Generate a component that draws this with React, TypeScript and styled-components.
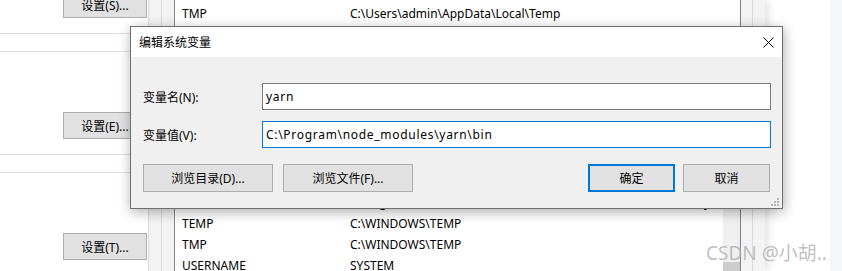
import React from "react";
import styled, { createGlobalStyle, css } from "styled-components";

const GlobalStyle = createGlobalStyle`
  html, body {
    margin: 0;
    padding: 0;
    background: #ffffff;
  }
  body {
    font-family: "Noto Sans", "Noto Sans CJK SC", sans-serif;
    font-size: 12px;
    color: #000000;
  }
`;

type EnvRow = { name: string; value: string };

const envRows: EnvRow[] = [
  { name: "TMP", value: "C:\\Users\\admin\\AppData\\Local\\Temp" },
  { name: "", value: "" },
  { name: "", value: "" },
  { name: "", value: "" },
  { name: "", value: "" },
  { name: "", value: "" },
  { name: "", value: "" },
  { name: "", value: "" },
  { name: "", value: "" },
  { name: "PSModulePath", value: "%ProgramFiles%\\WindowsPowerShell\\Modules;C:\\WINDOWS\\system32\\WindowsPowerShell\\v1.0\\Modules" },
  { name: "TEMP", value: "C:\\WINDOWS\\TEMP" },
  { name: "TMP", value: "C:\\WINDOWS\\TEMP" },
  { name: "USERNAME", value: "SYSTEM" },
];

const App: React.FC = () => {
  return (
    <>
      <GlobalStyle />
      <Screen>
        <BackWindow>
          <LeftPane>
            <SetButton>设置(S)...</SetButton>
            <GroupRule $gap={15} />
            <GroupRule $gap={17} />
            <SetButton $gap={60}>设置(E)...</SetButton>
            <GroupRule $gap={15} />
            <GroupRule $gap={17} />
            <SetButton $gap={60}>设置(T)...</SetButton>
          </LeftPane>

          <Strip>
            <StripCol $w={13} />
            <StripCol $w={13} />
          </Strip>

          <ListBox>
            <Rows>
              {envRows.map((row, i) => (
                <Row key={i}>
                  <NameCell>{row.name}</NameCell>
                  <ValueCell>{row.value}</ValueCell>
                </Row>
              ))}
            </Rows>
            <ScrollCol>
              <ScrollTrack>
                <ScrollThumb />
              </ScrollTrack>
            </ScrollCol>
          </ListBox>

          <Strip $shadow>
            <StripCol $w={11} $noBorder />
            <StripCol $w={13} />
          </Strip>

          <Filler />
        </BackWindow>
        <PageSide />

        <Dialog>
          <TitleBar>
            <Title>编辑系统变量</Title>
            <CloseButton>
              <svg width="11" height="11" viewBox="0 0 11 11">
                <path d="M0.5 0.5 L10.5 10.5 M10.5 0.5 L0.5 10.5" stroke="#000" strokeWidth="1" />
              </svg>
            </CloseButton>
          </TitleBar>
          <Body>
            <FieldRow>
              <FieldLabel>变量名(N):</FieldLabel>
              <TextBox>yarn</TextBox>
            </FieldRow>
            <FieldRow $gap={11}>
              <FieldLabel>变量值(V):</FieldLabel>
              <TextBox $focused>C:\Program\node_modules\yarn\bin</TextBox>
            </FieldRow>
            <ButtonRow>
              <ButtonGroup $gap={10}>
                <DlgButton $w={130}>浏览目录(D)...</DlgButton>
                <DlgButton $w={130}>浏览文件(F)...</DlgButton>
              </ButtonGroup>
              <ButtonGroup $gap={8}>
                <DlgButton $w={87} $primary>确定</DlgButton>
                <DlgButton $w={87}>取消</DlgButton>
              </ButtonGroup>
            </ButtonRow>
          </Body>
          <Grip width="9" height="9" viewBox="0 0 9 9">
            <rect x="6" y="0" width="2" height="2" fill="#b8b8b8" />
            <rect x="3" y="3" width="2" height="2" fill="#b8b8b8" />
            <rect x="6" y="3" width="2" height="2" fill="#b8b8b8" />
            <rect x="0" y="6" width="2" height="2" fill="#b8b8b8" />
            <rect x="3" y="6" width="2" height="2" fill="#b8b8b8" />
            <rect x="6" y="6" width="2" height="2" fill="#b8b8b8" />
          </Grip>
        </Dialog>

        <Watermark>CSDN @小胡..</Watermark>
      </Screen>
    </>
  );
};
export default App;

const Screen = styled.div`
  position: relative;
  width: 842px;
  height: 271px;
  overflow: hidden;
  display: flex;
  background: #ffffff;
`;

const BackWindow = styled.div`
  display: flex;
  width: 830px;
  height: 100%;
  background: #ffffff;
`;

const LeftPane = styled.div`
  width: 148px;
  flex-shrink: 0;
  display: flex;
  flex-direction: column;
  align-items: flex-end;
  margin-top: -9px;
`;

const SetButton = styled.div<{ $gap?: number }>`
  box-sizing: border-box;
  width: 84px;
  height: 27px;
  margin-right: 1px;
  margin-top: ${(p) => p.$gap || 0}px;
  flex-shrink: 0;
  background: #e1e1e1;
  border: 1px solid #adadad;
  display: flex;
  align-items: center;
  justify-content: center;
  font-size: 12px;
`;

const GroupRule = styled.div<{ $gap: number }>`
  align-self: stretch;
  height: 1px;
  flex-shrink: 0;
  margin-top: ${(p) => p.$gap}px;
  background: #dcdcdc;
`;

const Strip = styled.div<{ $shadow?: boolean }>`
  display: flex;
  flex-shrink: 0;
  height: 100%;
  ${(p) =>
    p.$shadow &&
    css`
      box-shadow: 3px 0 8px rgba(0, 0, 0, 0.12);
      position: relative;
    `}
`;

const StripCol = styled.div<{ $w: number; $noBorder?: boolean }>`
  box-sizing: border-box;
  width: ${(p) => p.$w}px;
  height: 100%;
  background: #f3f3f3;
  border-left: ${(p) => (p.$noBorder ? "none" : "1px solid #dadada")};
`;

const ListBox = styled.div`
  box-sizing: border-box;
  width: 567px;
  flex-shrink: 0;
  height: 100%;
  display: flex;
  background: #ffffff;
  border-left: 1px solid #828790;
  border-right: 1px solid #828790;
`;

const Rows = styled.div`
  flex: 1;
  min-width: 0;
  padding-top: 3px;
  overflow: hidden;
`;

const Row = styled.div`
  display: flex;
  height: 21px;
  line-height: 21px;
  padding-left: 7px;
  white-space: nowrap;
`;

const NameCell = styled.div`
  width: 168px;
  flex-shrink: 0;
  overflow: hidden;
`;

const ValueCell = styled.div`
  flex: 1;
  overflow: hidden;
`;

const ScrollCol = styled.div`
  width: 17px;
  flex-shrink: 0;
  display: flex;
  flex-direction: column;
  padding-top: 150px;
`;

const ScrollTrack = styled.div`
  flex: 1;
  background: #f0f0f0;
  padding-top: 112px;
`;

const ScrollThumb = styled.div`
  height: 100px;
  background: #cdcdcd;
`;

const Filler = styled.div`
  flex: 1;
  background: #ffffff;
`;

const PageSide = styled.div`
  flex: 1;
  background: #f5f6f7;
`;

const Dialog = styled.div`
  position: absolute;
  left: 130px;
  top: 26px;
  width: 653px;
  height: 183px;
  box-sizing: border-box;
  border: 1px solid #707070;
  background: #f0f0f0;
  display: flex;
  flex-direction: column;
  box-shadow: 1px 3px 12px rgba(0, 0, 0, 0.32);
`;

const TitleBar = styled.div`
  height: 30px;
  flex-shrink: 0;
  background: #ffffff;
  display: flex;
  align-items: center;
  justify-content: space-between;
  padding-left: 8px;
`;

const Title = styled.span`
  font-size: 12px;
`;

const CloseButton = styled.div`
  width: 28px;
  height: 30px;
  display: flex;
  align-items: center;
  justify-content: center;
`;

const Body = styled.div`
  flex: 1;
  padding: 26px 11px 0 12px;
  display: flex;
  flex-direction: column;
`;

const FieldRow = styled.div<{ $gap?: number }>`
  display: flex;
  align-items: center;
  height: 27px;
  margin-top: ${(p) => p.$gap || 0}px;
`;

const FieldLabel = styled.div`
  width: 119px;
  flex-shrink: 0;
`;

const TextBox = styled.div<{ $focused?: boolean }>`
  box-sizing: border-box;
  flex: 1;
  height: 27px;
  background: #ffffff;
  border: 1px solid ${(p) => (p.$focused ? "#0078d7" : "#7a7a7a")};
  padding-left: 3px;
  display: flex;
  align-items: center;
  white-space: nowrap;
  letter-spacing: 0.7px;
`;

const ButtonRow = styled.div`
  display: flex;
  justify-content: space-between;
  margin-top: 16px;
  margin-right: 1px;
`;

const ButtonGroup = styled.div<{ $gap: number }>`
  display: flex;
  gap: ${(p) => p.$gap}px;
`;

const DlgButton = styled.div<{ $w: number; $primary?: boolean }>`
  box-sizing: border-box;
  width: ${(p) => p.$w}px;
  height: 28px;
  background: #e1e1e1;
  border: ${(p) => (p.$primary ? "2px solid #0078d7" : "1px solid #adadad")};
  display: flex;
  align-items: center;
  justify-content: center;
  font-size: 12px;
`;

const Grip = styled.svg`
  position: absolute;
  right: 2px;
  bottom: 1px;
`;

const Watermark = styled.div`
  position: absolute;
  left: 706px;
  top: 238px;
  font-family: "Noto Sans", "Noto Sans CJK SC", sans-serif;
  font-size: 19px;
  color: rgba(110, 110, 110, 0.45);
  white-space: nowrap;
  text-shadow: 0 0 1px rgba(255, 255, 255, 0.6);
`;
